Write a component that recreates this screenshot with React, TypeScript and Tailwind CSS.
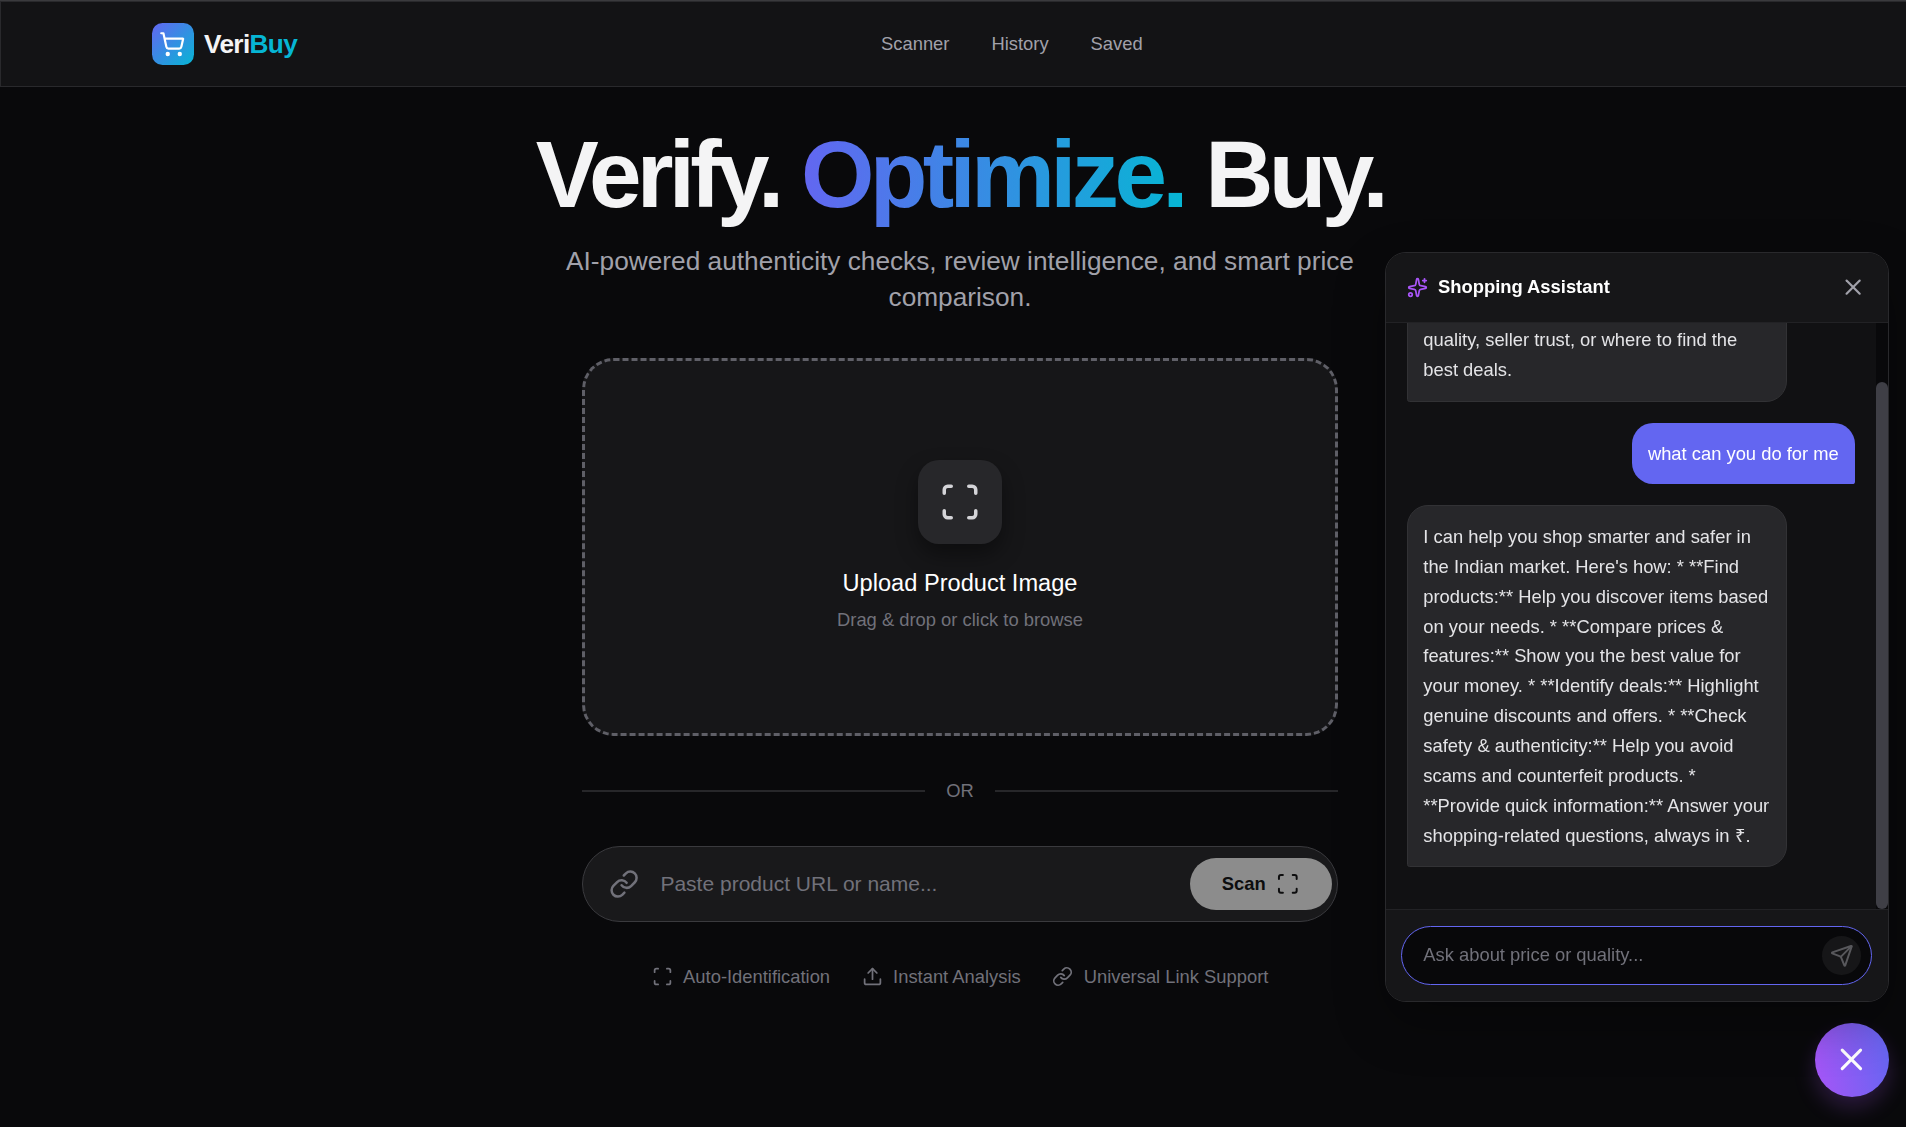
import { Link, Scan, Send, ShoppingCart, Sparkles, Upload, X } from "lucide-react";
import clsx from "clsx";

/* ── Content ─────────────────────────────────────────────────── */

const navLinks = ["Scanner", "History", "Saved"];

const features = [
  { icon: Scan, label: "Auto-Identification" },
  { icon: Upload, label: "Instant Analysis" },
  { icon: Link, label: "Universal Link Support" },
];

interface Message {
  role: "user" | "assistant";
  text: string;
}

const messages: Message[] = [
  {
    role: "assistant",
    text: "Hi! Ask me anything about product prices, quality, seller trust, or where to find the best deals.",
  },
  { role: "user", text: "what can you do for me" },
  {
    role: "assistant",
    text: "I can help you shop smarter and safer in the Indian market. Here's how: * **Find products:** Help you discover items based on your needs. * **Compare prices & features:** Show you the best value for your money. * **Identify deals:** Highlight genuine discounts and offers. * **Check safety & authenticity:** Help you avoid scams and counterfeit products. * **Provide quick information:** Answer your shopping-related questions, always in ₹.",
  },
];

/* ── Header ──────────────────────────────────────────────────── */

function Header() {
  return (
    <header className="border border-[#29292c] bg-[#131315]">
      <div className="mx-auto flex h-16 max-w-7xl items-center justify-between px-6">
        <div className="flex items-center gap-2">
          <div className="flex size-8 items-center justify-center rounded-lg bg-linear-135/srgb from-[#6366f1] to-[#06b6d4]">
            <ShoppingCart size={20} className="text-white" />
          </div>
          <span className="text-xl leading-[27px] font-bold tracking-tight text-zinc-100">
            Veri<span className="text-[#06b6d4]">Buy</span>
          </span>
        </div>
        <nav className="flex gap-8 text-sm text-[#a1a1aa]">
          {navLinks.map((label) => (
            <a key={label} href="#">{label}</a>
          ))}
        </nav>
        <div className="w-8" />
      </div>
    </header>
  );
}

/* ── Scanner ─────────────────────────────────────────────────── */

function UploadZone() {
  return (
    <div className="flex h-72 flex-col items-center justify-center rounded-3xl border-3 border-dashed border-[#5f5f67] bg-[#161618] pb-[1.5px]">
      <div className="mb-4 flex size-16 items-center justify-center rounded-2xl bg-[#27272a] text-[#d4d4d8] shadow-[0_8px_16px_rgba(0,0,0,0.4)]">
        <Scan size={32} />
      </div>
      <p className="mb-1 text-lg text-white">Upload Product Image</p>
      <p className="text-sm text-[#71717a]">Drag &amp; drop or click to browse</p>
    </div>
  );
}

function Divider() {
  return (
    <div className="mt-8 mb-[31.3px] flex items-center gap-4 text-sm text-[#71717a]">
      <div className="h-[1.5px] flex-1 bg-[#27272a]" />
      <span>OR</span>
      <div className="h-[1.5px] flex-1 bg-[#27272a]" />
    </div>
  );
}

function SearchBar() {
  return (
    <div className="flex h-[58px] items-center rounded-full border border-[#3a3a3e] bg-[#19191b] pr-1 pl-5">
      <Link size={23} className="shrink-0 text-[#71717a]" />
      <input
        className="min-w-0 flex-1 bg-transparent px-4 text-base outline-none placeholder:text-[#71717a]"
        placeholder="Paste product URL or name..."
      />
      <button className="flex h-[39.6px] items-center gap-2 rounded-full bg-[#8c8c8c] px-[24.4px] text-sm font-bold text-[#0d0d0e]">
        Scan
        <Scan size={18} />
      </button>
    </div>
  );
}

function Hero() {
  return (
    <main className="flex flex-col items-center pt-[30px]">
      <h1 className="mb-[16.5px] text-[72px] leading-none font-bold tracking-[-0.05em] text-zinc-100">
        Verify.{" "}
        <span className="bg-linear-90/srgb from-[#6366f1] to-[#06b6d4] bg-clip-text text-transparent">Optimize.</span>{" "}
        Buy.
      </h1>
      <p className="mb-[33px] max-w-[640px] text-center text-xl leading-[27.5px] text-[#a1a1aa]">
        AI-powered authenticity checks, review intelligence, and smart price comparison.
      </p>
      <div className="w-xl">
        <UploadZone />
        <Divider />
        <SearchBar />
      </div>
      <ul className="mt-8 flex gap-6 text-sm text-[#71717a]">
        {features.map(({ icon: Icon, label }) => (
          <li key={label} className="flex items-center gap-2">
            <Icon size={16} />
            {label}
          </li>
        ))}
      </ul>
    </main>
  );
}

/* ── Chat widget ─────────────────────────────────────────────── */

function Bubble({ role, text }: Message) {
  const isUser = role === "user";
  return (
    <div className={clsx("flex", isUser ? "justify-end" : "justify-start")}>
      <p
        className={clsx(
          "max-w-[84.8%] rounded-2xl p-3 text-sm leading-relaxed",
          isUser
            ? "rounded-br-[2px] bg-[#6366f1] pr-[12.6px] text-white"
            : "rounded-bl-[2px] border border-[#323235] bg-[#27272a] text-[#e4e4e7]",
        )}
      >
        {text}
      </p>
    </div>
  );
}

function ChatPanel() {
  return (
    <section className="relative z-10 flex h-[571.4px] w-96 flex-col overflow-hidden rounded-2xl border border-[#29292c] bg-[#111113] shadow-[0_16px_40px_rgba(0,0,0,0.3)]">
      <div className="flex items-center justify-between border-b border-[#222225] bg-[#161618] p-4 pb-[16.8px]">
        <div className="flex items-center gap-2">
          <Sparkles size={16} className="text-[#a855f7]" />
          <h2 className="text-sm font-bold text-white">Shopping Assistant</h2>
        </div>
        <X size={20} className="text-[#a1a1aa]" />
      </div>

      <div className="flex min-h-0 flex-1">
        {/* pinned to the latest message */}
        <div className="flex min-w-0 flex-1 flex-col justify-end gap-4 overflow-hidden px-4 pb-[31.7px]">
          {messages.map((message) => (
            <Bubble key={message.text} {...message} />
          ))}
        </div>
        <div className="flex w-[8.6px] flex-col justify-end bg-[#09090b]">
          <div className="h-[90%] rounded-full bg-[#3f3f46]" />
        </div>
      </div>

      <div className="border-t border-[#222225] bg-[#161618] p-3 pt-[12.6px]">
        <div className="flex h-[45px] items-center rounded-full border border-[#6366f1] bg-[#08080a] pr-[7.4px] pl-4">
          <input
            className="min-w-0 flex-1 bg-transparent pb-px text-sm outline-none placeholder:text-[#71717a]"
            placeholder="Ask about price or quality..."
          />
          <button className="flex size-[30px] items-center justify-center rounded-full bg-[#161618] text-[#58585c]">
            <Send size={18} />
          </button>
        </div>
      </div>
    </section>
  );
}

function ChatWidget() {
  return (
    <div className="fixed right-[13.3px] bottom-[23.2px] flex flex-col items-end gap-4">
      <ChatPanel />
      <button className="flex size-14 items-center justify-center rounded-full bg-linear-80/srgb from-[#a855f7] to-[#6366f1] text-white shadow-[0_8px_16px_rgba(168,85,247,0.22)]">
        <X size={28} />
      </button>
    </div>
  );
}

export default function App() {
  return (
    <div className="h-[858.7px] overflow-hidden bg-[#09090b] font-['Liberation_Sans',Arial,sans-serif] [zoom:1.3125]">
      <div className="w-[1462.86px]">
        <div className="h-px bg-[#3a3a3d]" />
        <Header />
        <Hero />
      </div>
      <ChatWidget />
    </div>
  );
}
